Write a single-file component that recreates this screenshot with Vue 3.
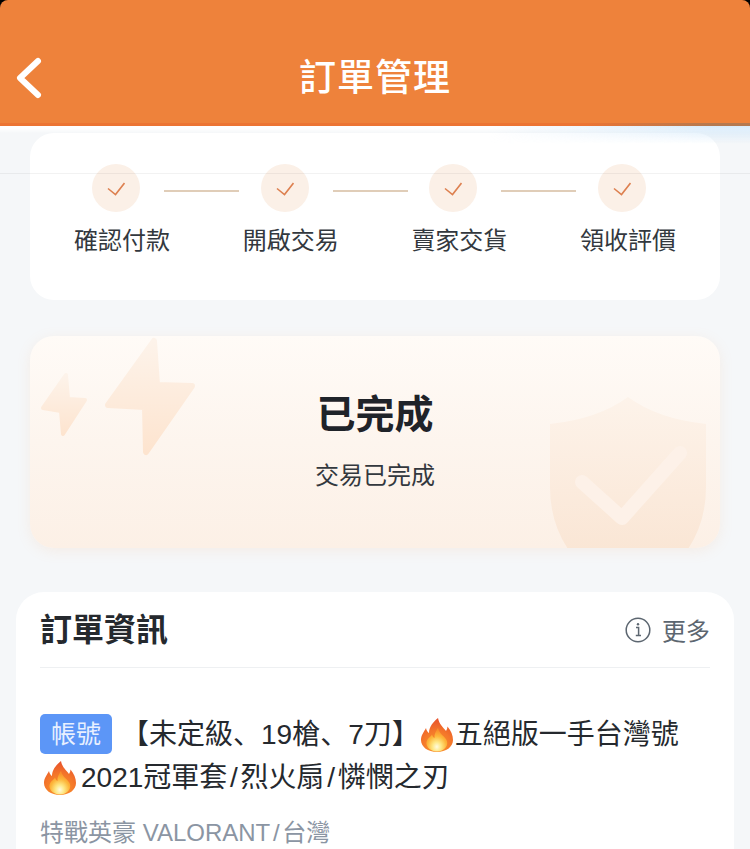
<template>
  <div class="page">
    <svg class="sprites" width="0" height="0">
      <defs>
        <radialGradient id="flameOuter" cx="0.5" cy="0.85" r="0.85">
          <stop offset="0" stop-color="#fb9a2c" />
          <stop offset="0.55" stop-color="#f4772a" />
          <stop offset="1" stop-color="#e7502c" />
        </radialGradient>
        <radialGradient id="flameInner" cx="0.5" cy="0.8" r="0.7">
          <stop offset="0" stop-color="#fffbe0" />
          <stop offset="0.3" stop-color="#fee784" />
          <stop offset="0.65" stop-color="#fdb63a" />
          <stop offset="1" stop-color="#f98f2a" />
        </radialGradient>
        <symbol id="flame" viewBox="0 0 34 36">
          <path d="M18 1 C19 7 23 10 26 14 C27 12.500 27.500 11 27.500 9.500 C31 14 33 18 33 23 C33 30 26 35 17 35 C8 35 1 30 1 23 C1 18 4 15 6 11 C6.500 13.500 7.500 15 9 16 C9 10 13 5 18 1 Z" fill="url(#flameOuter)" />
          <path d="M18 11 C19 17 25 19 27 24 C28.500 30 23 34.500 17 34.500 C11 34.500 5.500 30 6.500 25 C7.500 21 10.500 20 12 17.500 C12.500 19.500 13.500 20.500 14.500 21 C14 17 16 14 18 11 Z" fill="url(#flameInner)" />
        </symbol>
      </defs>
    </svg>

    <header class="topbar">
      <svg class="back" width="30" height="44" viewBox="0 0 30 44">
        <path d="M25 5 L7 22 L25 39" fill="none" stroke="#fff" stroke-width="6" stroke-linecap="round" stroke-linejoin="round" />
      </svg>
      <h1>訂單管理</h1>
    </header>

    <div class="glow"></div>
    <div class="glow-blue"></div>
    <div class="hairline"></div>

    <section class="steps">
      <div class="step-icons">
        <template v-for="(step, i) in steps" :key="step">
          <span class="circle">
            <svg width="18" height="14" viewBox="0 0 18 14">
              <path d="M1 6.500 L8.500 12.500 L17.500 1" fill="none" stroke="#dd8050" stroke-width="1.600" />
            </svg>
          </span>
          <span v-if="i < steps.length - 1" class="connector"></span>
        </template>
      </div>
      <div class="step-labels">
        <span v-for="step in steps" :key="step">{{ step }}</span>
      </div>
    </section>

    <section class="status">
      <svg class="bolts" width="170" height="130" viewBox="0 0 170 130">
        <defs>
          <linearGradient id="bolt" x1="0" y1="0" x2="0" y2="1">
            <stop offset="0" stop-color="#fdf3ea" />
            <stop offset="1" stop-color="#fde4cf" />
          </linearGradient>
        </defs>
        <path d="M124 5 L127 49 L162 50 L116 116 L115 71 L78 69 Z" fill="url(#bolt)" stroke="url(#bolt)" stroke-width="6" stroke-linejoin="round" />
        <path d="M36 39 L38 63 L55 64 L33 98 L31 75 L13 72 Z" fill="url(#bolt)" stroke="url(#bolt)" stroke-width="4" stroke-linejoin="round" />
      </svg>
      <svg class="shield" width="156" height="152" viewBox="0 0 156 152">
        <defs>
          <linearGradient id="shield" x1="0" y1="0" x2="0" y2="1">
            <stop offset="0" stop-color="#fdf3ea" />
            <stop offset="1" stop-color="#fae6d5" />
          </linearGradient>
        </defs>
        <path d="M78 0 Q108 22 156 27 L156 90 Q156 125 138 152 L18 152 Q0 125 0 90 L0 27 Q48 22 78 0 Z" fill="url(#shield)" />
        <path d="M32 85 L72 121 L130 56" fill="none" stroke="#fdf1e8" stroke-width="14" stroke-linecap="round" stroke-linejoin="round" />
      </svg>
      <h2>已完成</h2>
      <p>交易已完成</p>
    </section>

    <section class="order">
      <div class="order-head">
        <h3>訂單資訊</h3>
        <div class="more">
          <svg width="26" height="26" viewBox="0 0 26 26">
            <circle cx="13" cy="13" r="11.800" fill="none" stroke="#5c6670" stroke-width="1.500" />
            <path d="M11 10.500 H13.600 V18.500 M10.800 18.500 H16" fill="none" stroke="#5c6670" stroke-width="1.500" />
            <circle cx="13" cy="7.200" r="1.200" fill="#5c6670" />
          </svg>
          <span>更多</span>
        </div>
      </div>
      <div class="title-row first">
        <span class="tag">帳號</span>
        <span class="bracket">【未定級、19槍、7刀】</span>
        <svg class="fire" width="34" height="36"><use href="#flame" /></svg>
        <span>五絕版一手台灣號</span>
      </div>
      <div class="title-row">
        <svg class="fire second" width="34" height="36"><use href="#flame" /></svg>
        <span>2021冠軍套<span class="slash">/</span>烈火扇<span class="slash">/</span>憐憫之刃</span>
      </div>
      <div class="order-game">特戰英豪 VALORANT<span class="slash">/</span>台灣</div>
    </section>
  </div>
</template>

<script setup>
const steps = ['確認付款', '開啟交易', '賣家交貨', '領收評價']
</script>

<style>
html,
body {
  margin: 0;
  height: 849px;
  overflow: hidden;
  background: #f5f7f9;
}
</style>

<style scoped>
.page {
  position: relative;
  width: 750px;
  height: 849px;
  overflow: hidden;
  background: linear-gradient(#000 0 12px, #f5f7f9 12px);
  font-family: "Liberation Sans", "Noto Sans CJK TC", sans-serif;
  color: #1f2329;
}

.sprites {
  position: absolute;
}

.topbar {
  position: relative;
  height: 126px;
  box-sizing: border-box;
  padding-top: 54px;
  background: #ee823b;
  border-radius: 8px 8px 0 0;
  text-align: center;
}

.topbar::after {
  content: "";
  position: absolute;
  left: 0;
  right: 0;
  bottom: 0;
  height: 3px;
  background: linear-gradient(90deg, #ec7433 0%, #ec7433 78%, #b5794f 95%, #b5794f 100%);
}

.back {
  position: absolute;
  left: 13px;
  top: 56px;
}

h1 {
  margin: 0;
  font-size: 37px;
  line-height: 50px;
  font-weight: 500;
  letter-spacing: 1px;
  color: #fff;
}

.glow,
.glow-blue {
  position: absolute;
  left: 0;
  right: 0;
  top: 126px;
  z-index: 2;
}

.glow {
  height: 7px;
  background: linear-gradient(180deg, #fff 0%, #fff 35%, rgba(255, 255, 255, 0) 100%);
}

.glow-blue {
  height: 18px;
  background: linear-gradient(180deg, rgba(205, 230, 250, 0.75), rgba(205, 230, 250, 0));
  -webkit-mask-image: linear-gradient(90deg, transparent 65%, #000 95%);
  mask-image: linear-gradient(90deg, transparent 65%, #000 95%);
}

.hairline {
  position: absolute;
  left: 0;
  right: 0;
  top: 173px;
  height: 1px;
  background: rgba(0, 0, 0, 0.05);
  z-index: 2;
}

.steps {
  height: 167px;
  box-sizing: border-box;
  margin: 7px 30px 0;
  padding-top: 31px;
  background: #fff;
  border-radius: 24px;
}

.step-icons {
  display: flex;
  align-items: center;
  padding-left: 62px;
}

.circle {
  display: flex;
  align-items: center;
  justify-content: center;
  width: 48px;
  height: 48px;
  border-radius: 50%;
  background: #fbf0e7;
}

.circle svg {
  margin-top: 2px;
}

.connector {
  width: 75px;
  height: 2px;
  margin: 6px 21.67px 0 24px;
  background: #e0cdb8;
}

.step-labels {
  display: flex;
  gap: 72.7px;
  padding-left: 44px;
  margin-top: 11px;
  font-size: 24px;
  line-height: 36px;
  color: #33383e;
}

.status {
  position: relative;
  height: 212px;
  margin: 36px 30px 0;
  box-sizing: border-box;
  padding-top: 53px;
  overflow: hidden;
  border-radius: 24px;
  background: linear-gradient(180deg, #fffbf7 0%, #fdf5ee 50%, #fcf0e6 100%);
  box-shadow: 0 3px 14px rgba(245, 170, 110, 0.13);
  text-align: center;
}

.bolts {
  position: absolute;
  left: 0;
  top: 0;
}

.shield {
  position: absolute;
  left: 520px;
  top: 61px;
}

h2 {
  position: relative;
  margin: 0;
  font-size: 39px;
  line-height: 52px;
  font-weight: 700;
  color: #1f2329;
}

.status p {
  position: relative;
  margin: 18px 0 0;
  font-size: 24px;
  line-height: 34px;
  color: #33383e;
}

.order {
  height: 300px;
  margin: 44px 16px 0;
  padding: 0 24px;
  background: #fff;
  border-radius: 28px;
}

.order-head {
  display: flex;
  align-items: center;
  justify-content: space-between;
  height: 75px;
  border-bottom: 1px solid #eef0f2;
}

h3 {
  margin: 0;
  font-size: 32px;
  line-height: 44px;
  font-weight: 700;
  color: #25292e;
}

.more {
  display: flex;
  align-items: center;
  gap: 11px;
  font-size: 24px;
  color: #5c6670;
}

.title-row {
  display: flex;
  align-items: center;
  height: 43px;
  font-size: 28px;
  line-height: 43px;
  white-space: nowrap;
  color: #25292e;
}

.title-row.first {
  margin-top: 45px;
}

.tag {
  width: 72px;
  height: 40px;
  margin-top: -1px;
  border-radius: 5px;
  background: #5c96f7;
  font-size: 25px;
  line-height: 40px;
  text-align: center;
  color: #e8f0ff;
}

.bracket {
  margin-left: 9px;
  font-family: "Liberation Sans", "Noto Sans CJK SC", sans-serif;
}

.fire {
  margin-right: 1px;
}

.fire.second {
  margin: 0 4px 0 3px;
}

.slash {
  padding: 0 2.700px;
}

.order-game {
  margin-top: 17px;
  font-size: 24px;
  line-height: 34px;
  color: #8b95a3;
}
</style>
